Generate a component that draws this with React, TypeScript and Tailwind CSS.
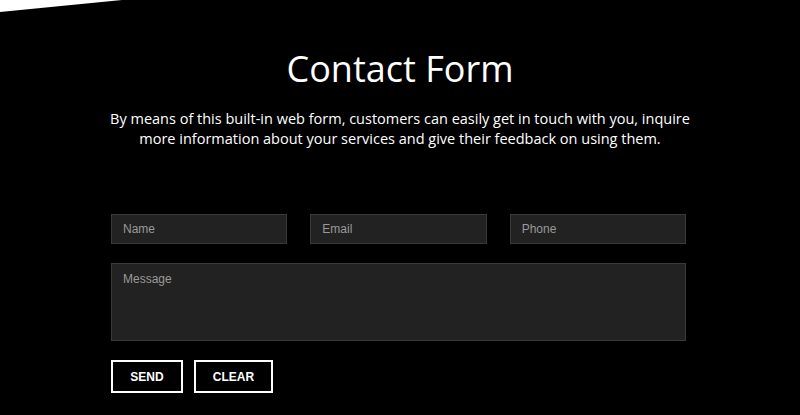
export default function App() {
  return (
    <div className="relative min-h-[415px] w-full overflow-hidden bg-black" style={{ fontFamily: '"Open Sans", sans-serif' }}>
      <div
        aria-hidden
        className="absolute left-0 top-0 h-[12px] w-[122px] bg-white [clip-path:polygon(0_0,100%_0,0_100%)]"
      />
      <div className="mx-auto flex w-[575px] flex-col items-center pt-[46px]">
        <h1 className="text-[36px] font-normal leading-[46px] text-white">Contact Form</h1>
        <p className="mt-[17px] w-[600px] shrink-0 text-center text-[14.5px] leading-[20px] text-white">
          By means of this built-in web form, customers can easily get in touch with you, inquire more information about your services and give their feedback on using them.
        </p>
      </div>
      <form
        className="ml-[111px] mt-[65px] flex w-[575px] flex-col"
        style={{ fontFamily: '"Liberation Sans", Arial, sans-serif' }}
        onSubmit={(e) => e.preventDefault()}
      >
        <div className="grid grid-cols-3 gap-[23px]">
          {['Name', 'Email', 'Phone'].map((p) => (
            <input
              key={p}
              placeholder={p}
              className="h-[30px] border border-[#3a3a3a] bg-[#222222] px-[11px] text-[12px] text-white outline-none placeholder:text-[#999999]"
            />
          ))}
        </div>
        <textarea
          placeholder="Message"
          className="mt-[19px] h-[78px] resize-none border border-[#3a3a3a] bg-[#222222] px-[11px] py-[6px] text-[12px] text-white outline-none placeholder:text-[#999999]"
        />
        <div className="mt-[19px] flex gap-[11px]">
          <button type="submit" className="h-[33px] w-[72px] border-2 border-white text-[12px] font-bold text-white">
            SEND
          </button>
          <button type="reset" className="h-[33px] w-[79px] border-2 border-white text-[12px] font-bold text-white">
            CLEAR
          </button>
        </div>
      </form>
    </div>
  );
}
